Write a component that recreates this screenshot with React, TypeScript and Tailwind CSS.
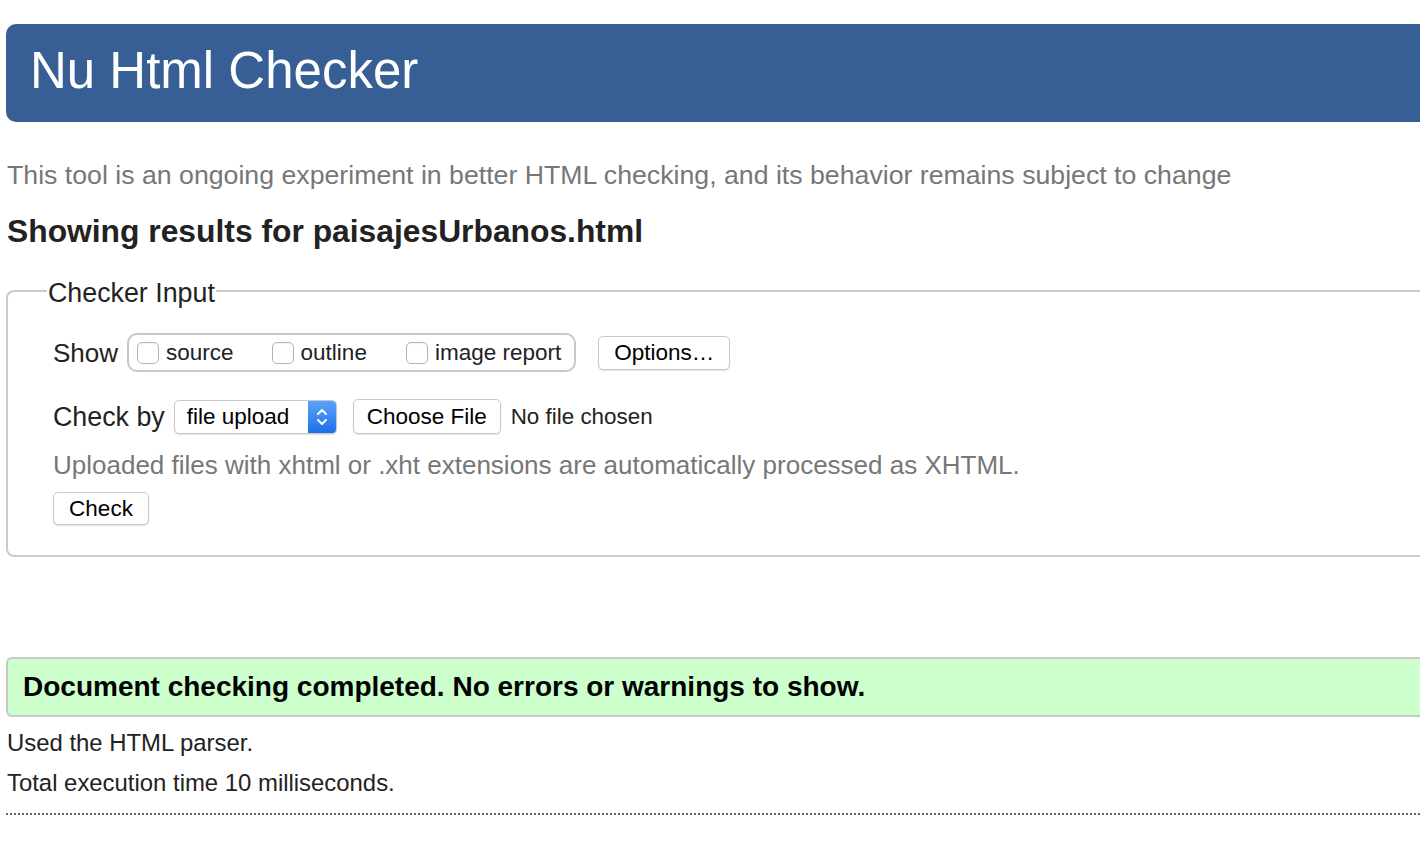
const font = { fontFamily: '"Liberation Sans", Arial, sans-serif' };

const Checkbox = () => (
  <span className="block h-[22px] w-[22px] shrink-0 rounded-[5px] border border-[#b5b5b5] bg-white shadow-[inset_0_1px_1px_rgba(0,0,0,0.05)]" />
);

const MacButton = ({ children, className = "" }: { children: React.ReactNode; className?: string }) => (
  <button
    className={
      "flex items-center justify-center rounded-[5px] border border-[#c9c9c9] bg-white text-[22.5px] text-black shadow-[0_1px_1px_rgba(0,0,0,0.12)] " +
      className
    }
  >
    {children}
  </button>
);

export default function App() {
  return (
    <div className="w-screen h-screen overflow-hidden bg-white text-[#222]" style={font}>
      <div className="w-[1480px] pl-[6px] pt-[24px]">
        {/* Header */}
        <div className="flex h-[98px] items-center rounded-l-[10px] bg-[#375f96] pb-[6px] pl-[24px]">
          <h1 className="text-[51px] leading-none text-white">Nu Html Checker</h1>
        </div>

        <p className="mt-[38px] pl-[1px] text-[26.7px] leading-[30px] text-[#777]">
          This tool is an ongoing experiment in better HTML checking, and its behavior remains subject to change
        </p>

        <h2 className="mt-[22px] pl-[1px] text-[31.8px] font-bold leading-[38px] text-[#222]">
          Showing results for paisajesUrbanos.html
        </h2>

        {/* Checker input fieldset */}
        <fieldset className="mt-[24px] rounded-l-[8px] border-2 border-r-0 border-[#cbcbcb] pb-[30px]">
          <legend className="ml-[39px] px-[1px] pt-[4px] text-[26.8px] leading-[30px] text-[#222]">Checker Input</legend>

          <div className="pl-[45px]">
            <div className="mt-[25px] flex items-center">
              <span className="text-[26px] leading-[32px] text-[#222]">Show</span>
              <div className="ml-[9px] flex h-[39px] items-center rounded-[10px] border-2 border-[#c8c8c8] pl-[8px] pr-[13px] text-[22.5px] text-[#222]">
                <Checkbox />
                <span className="ml-[7px]">source</span>
                <span className="ml-[38px]">
                  <Checkbox />
                </span>
                <span className="ml-[7px]">outline</span>
                <span className="ml-[39px]">
                  <Checkbox />
                </span>
                <span className="ml-[7px]">image report</span>
              </div>
              <MacButton className="ml-[22px] h-[34px] w-[132px]">Options…</MacButton>
            </div>

            <div className="mt-[27px] flex items-center">
              <span className="text-[26.8px] leading-[32px] text-[#222]">Check by</span>
              <div className="ml-[9px] flex h-[34px] w-[163px] items-stretch overflow-hidden rounded-[5px] border border-[#c9c9c9] bg-white shadow-[0_1px_1px_rgba(0,0,0,0.12)]">
                <span className="flex flex-1 items-center pl-[12px] text-[22.5px] text-black">file upload</span>
                <span className="flex w-[28px] items-center justify-center bg-gradient-to-b from-[#5aa2fa] to-[#1c6fe8]">
                  <svg width="14" height="22" viewBox="0 0 14 22" fill="none" stroke="white" strokeWidth="2" strokeLinecap="round" strokeLinejoin="round">
                    <path d="M3 8 L7 4 L11 8" />
                    <path d="M3 14 L7 18 L11 14" />
                  </svg>
                </span>
              </div>
              <MacButton className="ml-[16px] h-[35px] w-[148px]">Choose File</MacButton>
              <span className="ml-[10px] text-[22.4px] text-[#222]">No file chosen</span>
            </div>

            <p className="mt-[16px] text-[26px] leading-[30px] text-[#777]">
              Uploaded files with xhtml or .xht extensions are automatically processed as XHTML.
            </p>

            <MacButton className="mt-[12px] h-[33px] w-[96px]">Check</MacButton>
          </div>
        </fieldset>

        {/* Result */}
        <div className="mt-[100px] flex h-[60px] items-center rounded-l-[6px] border-2 border-r-0 border-[#c8c8c8] bg-[#ccffcc] pl-[15px]">
          <span className="text-[28px] font-bold text-black">
            Document checking completed. No errors or warnings to show.
          </span>
        </div>

        <p className="mt-[10px] pl-[1px] text-[23.9px] leading-[32px] text-[#222]">Used the HTML parser.</p>
        <p className="mt-[8px] pl-[1px] text-[23.9px] leading-[32px] text-[#222]">Total execution time 10 milliseconds.</p>

        <div className="mt-[14px] w-[1414px] border-t-2 border-dotted border-[#666]" />
      </div>
    </div>
  );
}
